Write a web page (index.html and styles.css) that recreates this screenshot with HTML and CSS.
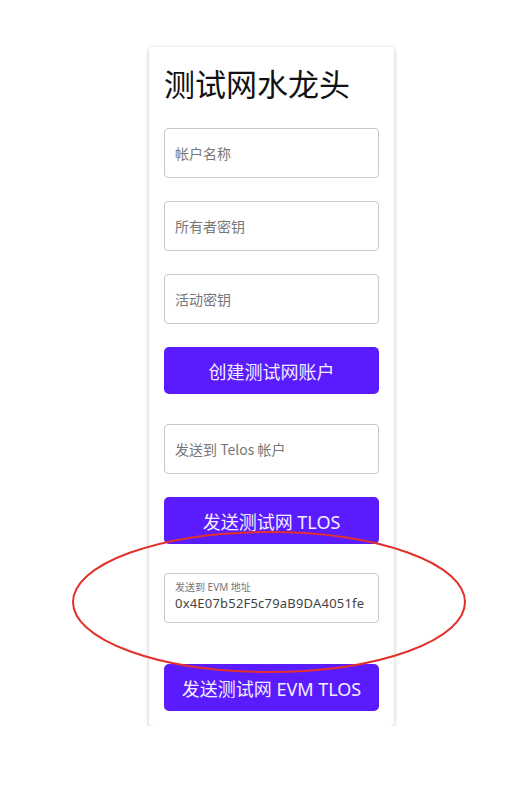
FILE: index.html
```html
<!DOCTYPE html>
<html>
  <head>
    <meta name="viewport" content="width=device-width, initial-scale=1">
    <link rel="stylesheet" href="styles.css">
  </head>
  <body>
    <div class="card">
      <h1>测试网水龙头</h1>
      <div class="field"><span class="placeholder">帐户名称</span></div>
      <div class="field"><span class="placeholder">所有者密钥</span></div>
      <div class="field"><span class="placeholder">活动密钥</span></div>
      <button class="button">创建测试网账户</button>
      <div class="field gap-top"><span class="placeholder">发送到 Telos 帐户</span></div>
      <button class="button">发送测试网 TLOS</button>
      <div class="field filled gap-top">
        <span class="label">发送到 EVM 地址</span>
        <span class="value">0x4E07b52F5c79aB9DA4051fe</span>
      </div>
      <button class="button last">发送测试网 EVM TLOS</button>
    </div>
    <svg class="mark" width="531" height="796" viewBox="0 0 531 796">
      <ellipse cx="269" cy="602" rx="196" ry="70" fill="none" stroke="#e3302a" stroke-width="2"/>
    </svg>
  </body>
</html>
```

FILE: styles.css
```css
body {
  margin: 0;
  background-color: #ffffff;
  font-family: "Noto Sans", "Noto Sans CJK SC", sans-serif;
}

.card {
  width: 215px;
  margin: 47px 0 0 149px;
  padding: 13px 15px 15px 15px;
  background-color: #ffffff;
  border-radius: 4px;
  box-shadow: 0 1px 4px rgba(0, 0, 0, 0.25);
  display: flex;
  flex-direction: column;
}

h1 {
  margin: 0 0 23px 0;
  font-family: "Noto Sans CJK SC", sans-serif;
  font-weight: 400;
  font-size: 31px;
  line-height: 45px;
  color: #111111;
}

.field {
  height: 48px;
  border: 1px solid #c8c8c8;
  border-radius: 4px;
  margin-bottom: 23px;
  padding: 0 10px;
  display: flex;
  flex-direction: column;
  justify-content: center;
}

.gap-top {
  margin-top: 30px;
}

.placeholder {
  font-family: "Noto Sans CJK SC", sans-serif;
  font-size: 14px;
  color: #777777;
}

.filled {
  margin-top: 29px;
  margin-bottom: 41px;
  justify-content: flex-start;
  padding-top: 6px;
  height: 42px;
}

.label {
  font-family: "Noto Sans", "Noto Sans CJK SC", sans-serif;
  font-size: 10px;
  line-height: 14px;
  color: #777777;
}

.value {
  font-family: "Noto Sans", sans-serif;
  font-size: 13px;
  line-height: 18px;
  color: #444444;
  letter-spacing: 0.2px;
  white-space: nowrap;
  overflow: hidden;
}

.button {
  height: 47px;
  border: none;
  border-radius: 5px;
  background-color: #5a1cff;
  color: #f3eeff;
  font-family: "Noto Sans", "Noto Sans CJK SC", sans-serif;
  font-size: 18px;
  padding: 0;
}

.last {
  margin-top: 0;
}

.mark {
  position: absolute;
  left: 0;
  top: 0;
  pointer-events: none;
}
```
